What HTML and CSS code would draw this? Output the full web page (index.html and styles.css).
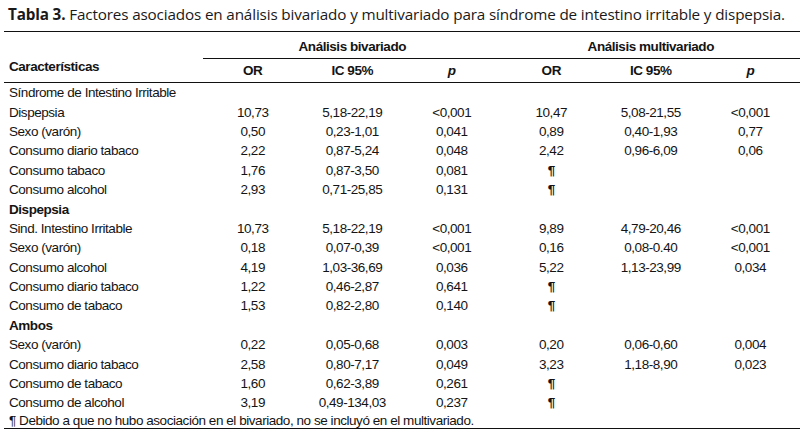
FILE: index.html
```html
<!DOCTYPE html>
<html lang="es">
<head>
<meta charset="utf-8">
<title>Tabla 3</title>
<link rel="stylesheet" href="styles.css">
</head>
<body>
<div class="page">
  <p class="caption"><b>Tabla 3.</b> Factores asociados en análisis bivariado y multivariado para síndrome de intestino irritable y dispepsia.</p>
  <table class="tbl">
    <colgroup>
      <col class="c-label">
      <col class="c-num"><col class="c-num"><col class="c-num">
      <col class="c-num"><col class="c-num"><col class="c-num">
    </colgroup>
    <thead>
      <tr class="h-group">
        <th rowspan="2" class="h-label">Características</th>
        <th colspan="3" class="h-span">Análisis bivariado</th>
        <th colspan="3" class="h-span">Análisis multivariado</th>
      </tr>
      <tr class="h-sub">
        <th>OR</th><th>IC 95%</th><th class="pval">p</th>
        <th>OR</th><th>IC 95%</th><th class="pval">p</th>
      </tr>
    </thead>
    <tbody>
      <tr><td class="lab">Síndrome de Intestino Irritable</td><td></td><td></td><td></td><td></td><td></td><td></td></tr>
      <tr><td class="lab">Dispepsia</td><td>10,73</td><td>5,18-22,19</td><td>&lt;0,001</td><td>10,47</td><td>5,08-21,55</td><td>&lt;0,001</td></tr>
      <tr><td class="lab">Sexo (varón)</td><td>0,50</td><td>0,23-1,01</td><td>0,041</td><td>0,89</td><td>0,40-1,93</td><td>0,77</td></tr>
      <tr><td class="lab">Consumo diario tabaco</td><td>2,22</td><td>0,87-5,24</td><td>0,048</td><td>2,42</td><td>0,96-6,09</td><td>0,06</td></tr>
      <tr><td class="lab">Consumo tabaco</td><td>1,76</td><td>0,87-3,50</td><td>0,081</td><td class="pil">¶</td><td></td><td></td></tr>
      <tr><td class="lab">Consumo alcohol</td><td>2,93</td><td>0,71-25,85</td><td>0,131</td><td class="pil">¶</td><td></td><td></td></tr>
      <tr><td class="lab grp">Dispepsia</td><td></td><td></td><td></td><td></td><td></td><td></td></tr>
      <tr><td class="lab">Sind. Intestino Irritable</td><td>10,73</td><td>5,18-22,19</td><td>&lt;0,001</td><td>9,89</td><td>4,79-20,46</td><td>&lt;0,001</td></tr>
      <tr><td class="lab">Sexo (varón)</td><td>0,18</td><td>0,07-0,39</td><td>&lt;0,001</td><td>0,16</td><td>0,08-0.40</td><td>&lt;0,001</td></tr>
      <tr><td class="lab">Consumo alcohol</td><td>4,19</td><td>1,03-36,69</td><td>0,036</td><td>5,22</td><td>1,13-23,99</td><td>0,034</td></tr>
      <tr><td class="lab">Consumo diario tabaco</td><td>1,22</td><td>0,46-2,87</td><td>0,641</td><td class="pil">¶</td><td></td><td></td></tr>
      <tr><td class="lab">Consumo de tabaco</td><td>1,53</td><td>0,82-2,80</td><td>0,140</td><td class="pil">¶</td><td></td><td></td></tr>
      <tr><td class="lab grp">Ambos</td><td></td><td></td><td></td><td></td><td></td><td></td></tr>
      <tr><td class="lab">Sexo (varón)</td><td>0,22</td><td>0,05-0,68</td><td>0,003</td><td>0,20</td><td>0,06-0,60</td><td>0,004</td></tr>
      <tr><td class="lab">Consumo diario tabaco</td><td>2,58</td><td>0,80-7,17</td><td>0,049</td><td>3,23</td><td>1,18-8,90</td><td>0,023</td></tr>
      <tr><td class="lab">Consumo de tabaco</td><td>1,60</td><td>0,62-3,89</td><td>0,261</td><td class="pil">¶</td><td></td><td></td></tr>
      <tr><td class="lab">Consumo de alcohol</td><td>3,19</td><td>0,49-134,03</td><td>0,237</td><td class="pil">¶</td><td></td><td></td></tr>
    </tbody>
    <tfoot>
      <tr><td colspan="7" class="note">¶ Debido a que no hubo asociación en el bivariado, no se incluyó en el multivariado.</td></tr>
    </tfoot>
  </table>
</div>
</body>
</html>
```
FILE: styles.css
```css
html, body {
  margin: 0;
  padding: 0;
  background: #ffffff;
}
.page {
  padding: 0 5px 0 4px;
  color: #141414;
}
.caption {
  margin: 4px 0 0 4px;
  font-family: "Open Sans", "Noto Sans", sans-serif;
  font-size: 15.25px;
  line-height: 20px;
  letter-spacing: -0.15px;
  color: #1a1a1a;
}
.caption b {
  font-weight: 700;
}
.tbl {
  margin-top: 7px;
  width: 796px;
  table-layout: fixed;
  border-collapse: collapse;
  font-family: "Liberation Sans", Arial, sans-serif;
  font-size: 13.5px;
  letter-spacing: -0.45px;
}
.c-label { width: 199px; }
.c-num { width: 99.5px; }
.tbl thead tr.h-group th {
  border-top: 1px solid #111;
}
.tbl th {
  font-weight: 700;
  text-align: center;
  padding: 0;
}
.h-group th {
  height: 24px;
}
.h-sub th {
  height: 23px;
  border-top: 1px solid #111;
  border-bottom: 1px solid #111;
}
.h-label {
  text-align: left !important;
  vertical-align: bottom;
  padding: 0 0 8px 5px !important;
  border-bottom: 1px solid #111;
}
.h-span {
  padding-top: 2px !important;
}
.pval {
  font-style: italic;
}
.tbl td {
  padding: 0;
  height: 19.4px;
  line-height: 15px;
  text-align: center;
  vertical-align: middle;
}
.tbl td.lab {
  text-align: left;
  padding-left: 5px;
  white-space: nowrap;
}
.tbl td.grp {
  font-weight: 700;
}
.tbl td.pil {
  font-weight: 700;
}
.tbl td.note {
  text-align: left;
  padding-left: 5px;
  height: 14px;
  line-height: 14px;
  padding-top: 1px;
  vertical-align: top;
  border-bottom: 1px solid #111;
}
```
